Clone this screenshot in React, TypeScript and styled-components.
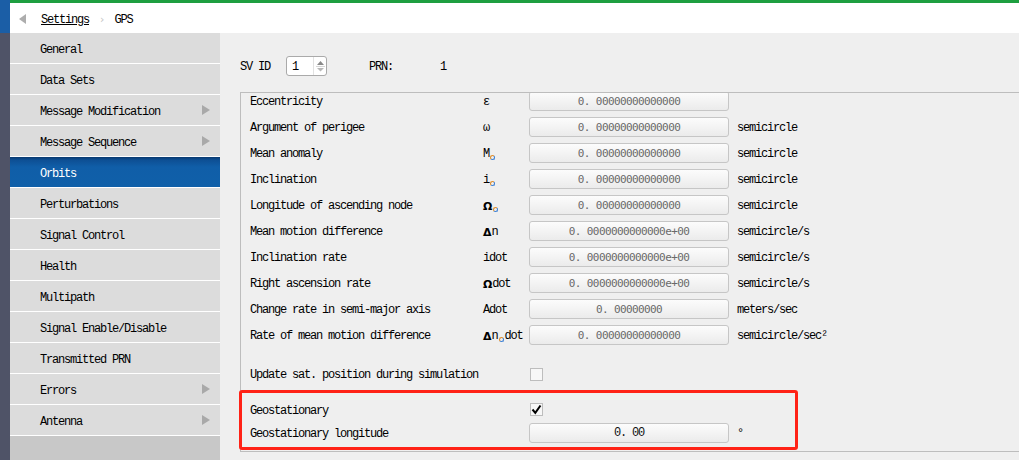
import React from "react";
import styled, { createGlobalStyle } from "styled-components";

const GlobalStyle = createGlobalStyle`
  html, body {
    margin: 0;
    padding: 0;
  }
  body {
    font-family: "Liberation Mono", "DejaVu Sans Mono", monospace;
    font-size: 12px;
    letter-spacing: -1.2px;
    color: #000;
    background: #efefef;
    overflow: hidden;
  }
  * {
    box-sizing: border-box;
  }
`;

interface OrbitRow {
  label: string;
  symbol: React.ReactNode;
  value: string;
  unit?: string;
}

const navItems: { name: string; arrow?: boolean }[] = [
  { name: "General" },
  { name: "Data Sets" },
  { name: "Message Modification", arrow: true },
  { name: "Message Sequence", arrow: true },
  { name: "Orbits" },
  { name: "Perturbations" },
  { name: "Signal Control" },
  { name: "Health" },
  { name: "Multipath" },
  { name: "Signal Enable/Disable" },
  { name: "Transmitted PRN" },
  { name: "Errors", arrow: true },
  { name: "Antenna", arrow: true },
];

const ZERO = "0. 00000000000000";
const ZERO_E = "0. 0000000000000e+00";

const rows: OrbitRow[] = [
  { label: "Eccentricity", symbol: "ε", value: ZERO },
  { label: "Argument of perigee", symbol: "ω", value: ZERO, unit: "semicircle" },
  { label: "Mean anomaly", symbol: <>M<Sub /></>, value: ZERO, unit: "semicircle" },
  { label: "Inclination", symbol: <>i<Sub /></>, value: ZERO, unit: "semicircle" },
  { label: "Longitude of ascending node", symbol: <><b>Ω</b><Sub /></>, value: ZERO, unit: "semicircle" },
  { label: "Mean motion difference", symbol: <><b>Δ</b>n</>, value: ZERO_E, unit: "semicircle/s" },
  { label: "Inclination rate", symbol: "idot", value: ZERO_E, unit: "semicircle/s" },
  { label: "Right ascension rate", symbol: <><b>Ω</b>dot</>, value: ZERO_E, unit: "semicircle/s" },
  { label: "Change rate in semi-major axis", symbol: "Adot", value: "0. 00000000", unit: "meters/sec" },
  { label: "Rate of mean motion difference", symbol: <><b>Δ</b>n<Sub />dot</>, value: ZERO, unit: "semicircle/sec²" },
];

function Sub() {
  return <SubMark />;
}

export default function App() {
  return (
    <>
      <GlobalStyle />
      <Page>
        <Rail>
          <RailTop />
          <RailRest />
        </Rail>
        <Main>
          <TopLine />
          <Header>
            <BackArrow />
            <Crumb>Settings</Crumb>
            <CrumbSep>›</CrumbSep>
            <span>GPS</span>
          </Header>
          <Body>
            <Sidebar>
              {navItems.map((item) => (
                <NavItem key={item.name} $active={item.name === "Orbits"}>
                  <NavText>{item.name}</NavText>
                  {item.arrow && <NavArrow />}
                </NavItem>
              ))}
            </Sidebar>
            <Content>
              <SvRow>
                <SvLabel>SV ID</SvLabel>
                <Spin>
                  <SpinValue>1</SpinValue>
                  <SpinButtons>
                    <svg width="9" height="14" viewBox="0 0 9 14">
                      <path d="M4.5 2 L8 6 L1 6 Z" fill="#8a8a8a" />
                      <line x1="0" y1="7.5" x2="9" y2="7.5" stroke="#d6d6d6" />
                      <path d="M1 9 L8 9 L4.5 12.5 Z" fill="#b8b8b8" />
                    </svg>
                  </SpinButtons>
                </Spin>
                <PrnLabel>PRN:</PrnLabel>
                <PrnValue>1</PrnValue>
              </SvRow>

              <Frame>
                <Scroller>
                  <RowList>
                    {rows.map((r) => (
                      <Row key={r.label}>
                        <Label>{r.label}</Label>
                        <Symbol>{r.symbol}</Symbol>
                        <ValueBox>{r.value}</ValueBox>
                        <Unit>{r.unit}</Unit>
                      </Row>
                    ))}
                    <Row $gap={13}>
                      <Label>Update sat. position during simulation</Label>
                      <span />
                      <Check />
                    </Row>
                    <Row $gap={11} $h={23}>
                      <Label>Geostationary</Label>
                      <span />
                      <Check>
                        <svg width="11" height="11" viewBox="0 0 11 11">
                          <path d="M1.5 5.5 L4.3 8.8 L9.5 1.5" fill="none" stroke="#000" strokeWidth="2" />
                        </svg>
                      </Check>
                    </Row>
                    <Row $h={23}>
                      <Label>Geostationary longitude</Label>
                      <span />
                      <ValueBox $dark>0. 00</ValueBox>
                      <Unit>°</Unit>
                    </Row>
                  </RowList>
                </Scroller>
                <Highlight />
              </Frame>
            </Content>
          </Body>
        </Main>
      </Page>
    </>
  );
}

const Page = styled.div`
  display: flex;
  width: 100vw;
  height: 100vh;
`;

const Rail = styled.div`
  width: 10px;
  display: flex;
  flex-direction: column;
`;

const RailTop = styled.div`
  height: 33px;
  background: #1b5ea6;
`;

const RailRest = styled.div`
  flex: 1;
  background: #4f5367;
`;

const Main = styled.div`
  flex: 1;
  display: flex;
  flex-direction: column;
  min-width: 0;
`;

const TopLine = styled.div`
  height: 3px;
  background: #1e9f40;
`;

const Header = styled.div`
  height: 30px;
  background: #fff;
  display: flex;
  align-items: center;
  padding: 3px 0 0 9px;
`;

const BackArrow = styled.div`
  width: 0;
  height: 0;
  margin-top: -2px;
  border-top: 5px solid transparent;
  border-bottom: 5px solid transparent;
  border-right: 7px solid #adadad;
  margin-right: 15px;
`;

const Crumb = styled.span`
  text-decoration: underline;
`;

const CrumbSep = styled.span`
  color: #c4c4c4;
  margin: 0 10px 0 11px;
  font-family: "DejaVu Sans", sans-serif;
  letter-spacing: 0;
  font-size: 11px;
`;

const Body = styled.div`
  flex: 1;
  display: flex;
  min-height: 0;
`;

const Sidebar = styled.div`
  width: 210px;
  background: #c8c8c8;
  display: flex;
  flex-direction: column;
`;

const NavItem = styled.div<{ $active?: boolean }>`
  height: 31px;
  flex-shrink: 0;
  border-bottom: 1px solid #fff;
  padding: 0 10px 0 30px;
  display: flex;
  align-items: center;
  justify-content: space-between;
  color: ${(p) => (p.$active ? "#fff" : "#000")};
  background: ${(p) =>
    p.$active
      ? "linear-gradient(#08386f 0px, #0d4f94 3px, #105ea8 10px, #1060a9 100%)"
      : "#dcdcdc"};
`;

const NavText = styled.span`
  padding-top: 4px;
`;

const NavArrow = styled.div`
  width: 0;
  height: 0;
  border-top: 5px solid transparent;
  border-bottom: 5px solid transparent;
  border-left: 8px solid #a9a9a9;
`;

const Content = styled.div`
  flex: 1;
  padding: 23px 0 0 20px;
  overflow: hidden;
  background: #efefef;
`;

const SvRow = styled.div`
  display: flex;
  align-items: center;
  height: 20px;
`;

const SvLabel = styled.span`
  width: 46px;
  padding-top: 2px;
`;

const Spin = styled.div`
  width: 41px;
  height: 20px;
  background: #fff;
  border: 1px solid #aaaaaa;
  border-radius: 3px;
  display: flex;
  align-items: center;
`;

const SpinValue = styled.span`
  flex: 1;
  padding: 2px 0 0 5px;
`;

const SpinButtons = styled.div`
  width: 13px;
  height: 100%;
  display: flex;
  align-items: center;
  justify-content: center;
  border-left: 1px solid #e2e2e2;
`;

const PrnLabel = styled.span`
  margin-left: 42px;
  padding-top: 2px;
`;

const PrnValue = styled.span`
  margin-left: 47px;
  padding-top: 2px;
`;

const Frame = styled.div`
  position: relative;
  margin-top: 16px;
  width: 820px;
  border: 1px solid #bdbdbd;
`;

const Scroller = styled.div`
  overflow: hidden;
  padding: 0 0 7px 9px;
`;

const RowList = styled.div`
  margin-top: -5px;
`;

const Row = styled.div<{ $gap?: number; $h?: number }>`
  display: grid;
  grid-template-columns: 233px 46px 200px auto;
  align-items: center;
  height: ${(p) => p.$h ?? 26}px;
  margin-top: ${(p) => p.$gap ?? 0}px;
`;

const Label = styled.span`
  padding-top: 2px;
`;

const Symbol = styled.span`
  display: flex;
  align-items: flex-end;
  padding-top: 2px;
  b {
    font-family: "DejaVu Sans", sans-serif;
    letter-spacing: 0;
    font-size: 11px;
  }
`;

const SubMark = styled.span`
  display: inline-block;
  width: 5px;
  height: 5px;
  margin: 0 1px 1px 1px;
  border: 1px solid;
  border-color: #e08d2a #3b7fd4 #3b7fd4 #e08d2a;
  border-radius: 50%;
`;

const ValueBox = styled.div<{ $dark?: boolean }>`
  height: 20px;
  border: 1px solid #c6c6c6;
  border-radius: 3px;
  background: linear-gradient(#fcfcfc, #ebebeb);
  display: flex;
  align-items: center;
  justify-content: center;
  padding-top: 1px;
  font-family: ${(p) => (p.$dark ? `"Liberation Mono", monospace` : `"DejaVu Sans Mono", monospace`)};
  font-size: ${(p) => (p.$dark ? 12 : 11)}px;
  letter-spacing: ${(p) => (p.$dark ? -1.2 : -0.6)}px;
  color: ${(p) => (p.$dark ? "#111" : "#6a6a6a")};
`;

const Unit = styled.span`
  padding: 2px 0 0 8px;
`;

const Check = styled.div`
  width: 13px;
  height: 13px;
  margin-left: 1px;
  border: 1px solid #bdbdbd;
  background: #f7f7f7;
  display: flex;
  align-items: center;
  justify-content: center;
`;

/* red annotation drawn over the screenshot */
const Highlight = styled.div`
  position: absolute;
  left: -2px;
  top: 297px;
  width: 559px;
  height: 60px;
  border: 3px solid #ff2216;
  border-radius: 3px;
  pointer-events: none;
`;
